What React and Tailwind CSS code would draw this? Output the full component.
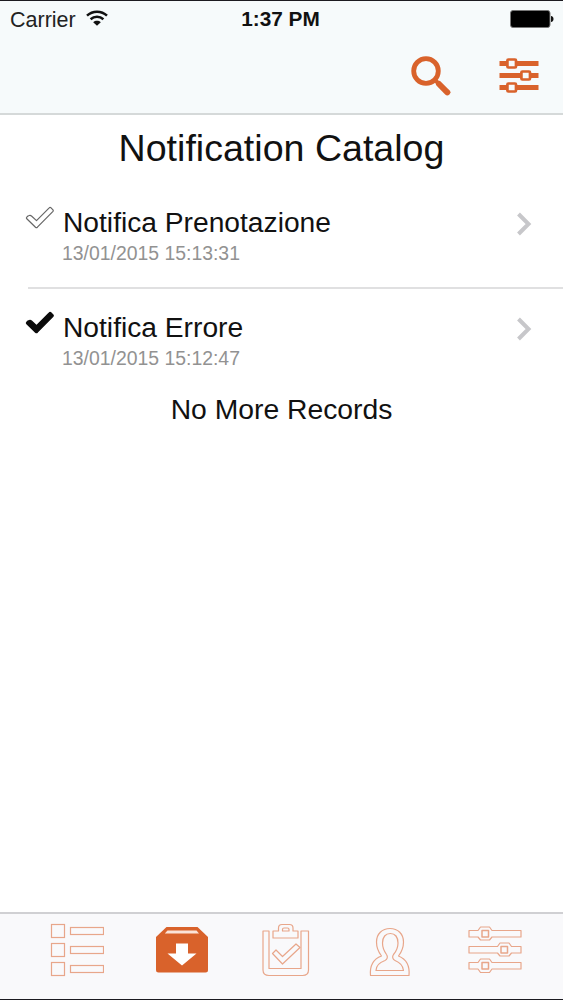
const NOTIFICATIONS = [
  { title: 'Notifica Prenotazione', date: '13/01/2015 15:13:31', read: false },
  { title: 'Notifica Errore', date: '13/01/2015 15:12:47', read: true },
]

function WifiIcon() {
  return (
    <svg className="mb-0.5 w-[22px] h-4" viewBox="0 0 22 16" fill="none" stroke="#111" strokeWidth="2.5">
      <path d="M1 5.6C6.6 .4 15.4 .4 21 5.6" />
      <path d="M4.6 9.2C8.3 5.9 13.7 5.9 17.4 9.2" />
      <path d="M11 15.8L7.2 12.2C9.4 10.3 12.6 10.3 14.8 12.2Z" fill="#111" stroke="none" />
    </svg>
  )
}

function BatteryIcon() {
  return (
    <svg className="w-11 h-[18px]" viewBox="0 0 44 18">
      <rect x=".5" y=".5" width="39.5" height="17" rx="2.5" fill="#000" stroke="#777" />
      <path d="M41 6C42.6 6.3 43.5 7.3 43.5 9S42.6 11.7 41 12Z" fill="#111" />
    </svg>
  )
}

function SearchIcon() {
  return (
    <svg className="mt-0.5 w-10 h-10" viewBox="0 0 40 40" fill="none" stroke="#d9622b">
      <circle cx="15" cy="15" r="12.3" strokeWidth="4.8" />
      <path d="M23.5 23.5L28 28" strokeWidth="4" />
      <path d="M28 28L36.3 36.3" strokeWidth="6" strokeLinecap="round" />
    </svg>
  )
}

function FilterIcon() {
  return (
    <svg className="w-10 h-[35px]" viewBox="0 0 40 35" fill="none" stroke="#d9622b">
      <path d="M.5 5.5H8M17 5.5H39.5M.5 17.5H22M31 17.5H39.5M.5 29.5H8M17 29.5H39.5" strokeWidth="5" />
      <rect x="8.4" y="1.5" width="8.6" height="8" rx="1" strokeWidth="2.7" />
      <rect x="22.4" y="13.5" width="8.6" height="8" rx="1" strokeWidth="2.7" />
      <rect x="8.4" y="25.5" width="8.6" height="8" rx="1" strokeWidth="2.7" />
    </svg>
  )
}

function CheckIcon({ filled }) {
  return (
    <svg className="w-[30px] h-6" viewBox="0 0 30 24" strokeLinejoin="round">
      <path
        d="M4.2 9.5Q5.5 9 6.5 10L11.5 14.6L24.2 1.9Q25 1 26 1.8L28 3.8Q28.6 4.7 28 5.4L12.4 21.2Q11.5 22 10.5 21.2L1.8 12.8Q1 12 1.8 11.2L3 10Q3.5 9.6 4.2 9.5Z"
        fill={filled ? '#0b0b0b' : '#fff'}
        stroke={filled ? '#0b0b0b' : '#666'}
        strokeWidth="1.2"
      />
    </svg>
  )
}

function ChevronIcon() {
  return (
    <svg className="w-4 h-6" viewBox="0 0 16 24" fill="none" stroke="#c7c7ca" strokeWidth="4">
      <path d="M2.5 2L12.5 12L2.5 22" />
    </svg>
  )
}

function ListTab() {
  return (
    <svg className="w-[54px] h-[54px]" viewBox="0 0 54 54" fill="none" stroke="#e8a68a" strokeWidth="1.2">
      <rect x="1.5" y="1.5" width="13" height="13" />
      <rect x="20.5" y="4.5" width="33" height="7" />
      <rect x="1.5" y="20.5" width="13" height="13" />
      <rect x="20.5" y="23.5" width="33" height="7" />
      <rect x="1.5" y="39.5" width="13" height="13" />
      <rect x="20.5" y="42.5" width="33" height="7" />
    </svg>
  )
}

function InboxTab() {
  return (
    <svg className="w-[54px] h-[54px]" viewBox="0 0 54 54">
      <path d="M11.5 4H42.5L53 14V47Q53 49.5 50.5 49.5H3.5Q1 49.5 1 47V14Z" fill="#d9622b" />
      <path d="M12.5 7.5H41.5L44 10.4H9.8Z" fill="#fbe3d8" />
      <path d="M21 20.5H33V30.5H41.5L27 42.5L12.5 30.5H21Z" fill="#fff" />
    </svg>
  )
}

function ClipboardTab() {
  return (
    <svg className="w-[54px] h-[54px]" viewBox="0 0 54 54" fill="none" stroke="#e8a68a" strokeWidth="1.2" strokeLinejoin="round">
      <path d="M4 8H10V45.5H42V8H49.5V47Q49.5 52.5 43.5 52.5H10Q4 52.5 4 47Z" />
      <path d="M14 8H19.5V5Q19.5 1.5 23 1.5H30.5Q34 1.5 34 5V8H39V15H14Z" />
      <path d="M23.5 8V6.5Q23.5 5 25 5H28.5Q30 5 30 6.5V8Z" />
      <path d="M13.5 30.5L17 27L23.5 33.5L37 21L41 24.5L23.5 41Z" />
    </svg>
  )
}

function ProfileTab() {
  return (
    <svg className="w-[54px] h-[54px]" viewBox="0 0 54 54" fill="none" stroke="#e8a68a" strokeWidth="1.2" strokeLinejoin="round">
      <path d="M6.5 52.5C5.5 41.5 9.5 36 17.5 33C14 28.5 12.5 24 12.5 19C12.5 11 18 5.5 26 5.5S39.5 11 39.5 19C39.5 24 38 28.5 34.5 33C42 36 46 41.5 45 52.5Z" />
      <path d="M12 47.5H39.5C39 42 36 39.5 31 37.5C28.5 36.5 28 33.5 29.5 31.5C32.5 28 34 24.5 34 20C34 14 31 10.5 26.3 10.5S18.5 14 18.5 20C18.5 24.5 20 28 22.5 31.5C24 33.5 23.5 36.5 21 37.5C15.5 39.5 12 42 12 47.5Z" />
    </svg>
  )
}

function SettingsTab() {
  return (
    <svg className="w-[54px] h-[54px]" viewBox="0 0 54 54" fill="none" stroke="#e8a68a" strokeWidth="1.2" strokeLinejoin="round">
      <path d="M1 7.5H10L12.5 4H21.5L24 7.5H53V14H24L21.5 17H12.5L10 14H1Z" />
      <rect x="14" y="7.5" width="6.5" height="6.5" strokeWidth="1.5" />
      <path d="M1 23.5H29.5L32 20H41L43.5 23.5H53V30H43.5L41 33H32L29.5 30H1Z" />
      <rect x="33" y="23.5" width="6.5" height="6.5" strokeWidth="1.5" />
      <path d="M1 39.5H10L12.5 36H21.5L24 39.5H53V46H24L21.5 49.5H12.5L10 46H1Z" />
      <rect x="14" y="39.5" width="6.5" height="6.5" strokeWidth="1.5" />
    </svg>
  )
}

function NotificationRow({ item, divider }) {
  return (
    <li className="pl-7">
      <div className={`flex pr-[31px] ${divider ? 'h-[105px] border-b-2 border-[#e0e0e1]' : 'h-[104px]'}`}>
        <div className="-ml-[3px] mt-[22px] w-[38px] shrink-0">
          <CheckIcon filled={item.read} />
        </div>
        <div className="flex-1 pt-[21px]">
          <h2 className="text-[28.2px] leading-[34px] text-[#111]">{item.title}</h2>
          <p className="-ml-px mt-0.5 text-[19.4px] leading-6 text-[#929292]">{item.date}</p>
        </div>
        <div className="mt-[28px]">
          <ChevronIcon />
        </div>
      </div>
    </li>
  )
}

export default function App() {
  return (
    <div className="flex h-[1000px] w-[563px] flex-col overflow-hidden border-y border-[#1c1a20] bg-white font-['Liberation_Sans',Arial,sans-serif]">
      <header className="h-[114px] shrink-0 border-b-2 border-[#d5d9d9] bg-[#f6fafb]">
        <div className="grid h-9 grid-cols-3 items-center pl-[10px] pr-[9px]">
          <div className="flex items-center gap-[10px]">
            <span className="pt-0.5 text-[21.5px] leading-6 text-[#222]">Carrier</span>
            <WifiIcon />
          </div>
          <span className="pr-[3px] text-center text-[20.8px] font-bold leading-6 text-[#111]">1:37 PM</span>
          <div className="flex justify-end">
            <BatteryIcon />
          </div>
        </div>
        <div className="flex h-[76px] items-center justify-end gap-12 pr-6">
          <button><SearchIcon /></button>
          <button><FilterIcon /></button>
        </div>
      </header>

      <main className="flex-1">
        <h1 className="pt-[11px] text-center text-[37.6px] leading-[44px] text-[#111]">Notification Catalog</h1>
        <ul className="mt-[14px]">
          {NOTIFICATIONS.map((item, i) => (
            <NotificationRow key={item.title} item={item} divider={i < NOTIFICATIONS.length - 1} />
          ))}
        </ul>
        <p className="text-center text-[28.3px] leading-8 text-[#111]">No More Records</p>
      </main>

      <nav className="flex h-[87px] shrink-0 justify-between border-t-2 border-[#d0d0d3] bg-[#f9f9fb] pl-[50px] pr-[41px] pt-[9px]">
        <ListTab />
        <InboxTab />
        <ClipboardTab />
        <ProfileTab />
        <SettingsTab />
      </nav>
    </div>
  )
}
